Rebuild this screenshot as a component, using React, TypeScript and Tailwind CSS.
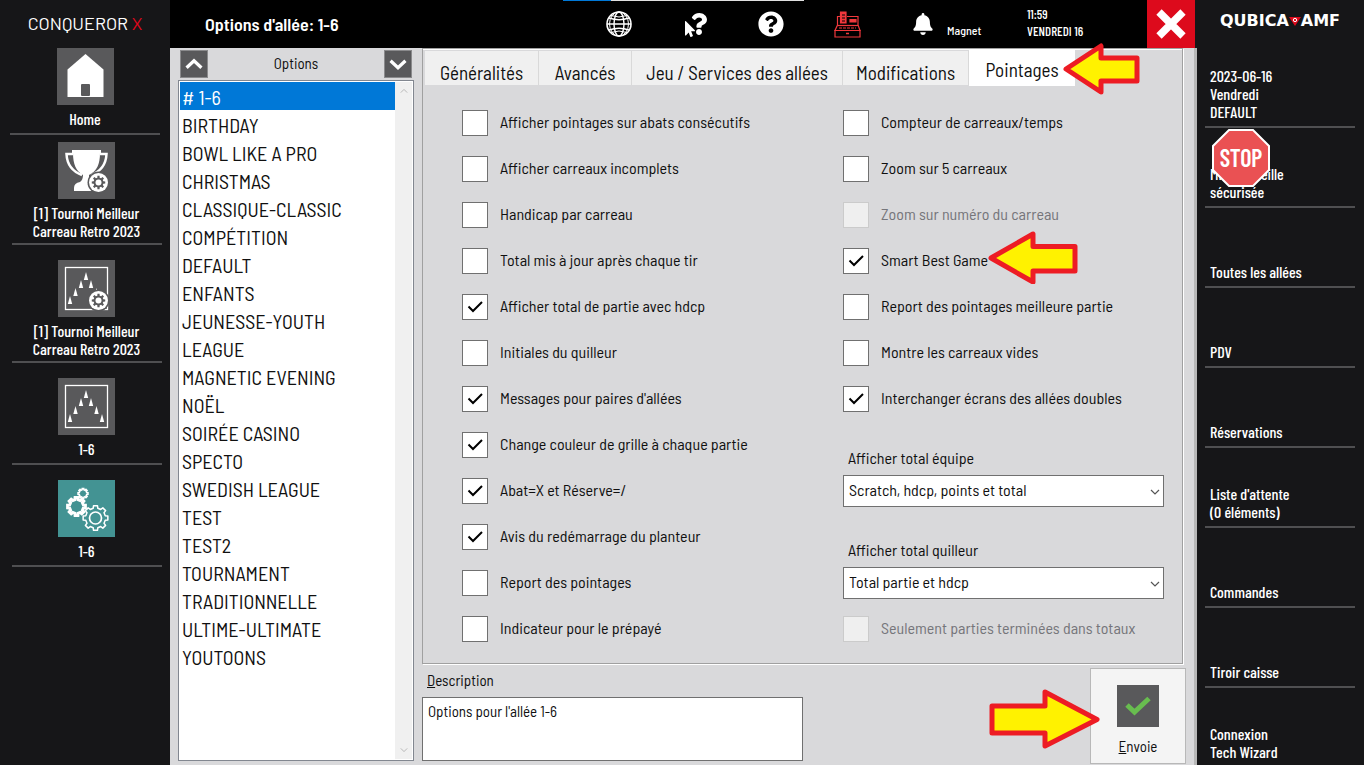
import React, { useState } from 'react';
import { FaBell, FaMousePointer, FaQuestion, FaQuestionCircle } from 'react-icons/fa';

const OPTIONS = [
    '# 1-6', 'BIRTHDAY', 'BOWL LIKE A PRO', 'CHRISTMAS', 'CLASSIQUE-CLASSIC', 'COMPÉTITION', 'DEFAULT',
    'ENFANTS', 'JEUNESSE-YOUTH', 'LEAGUE', 'MAGNETIC EVENING', 'NOËL', 'SOIRÉE CASINO', 'SPECTO',
    'SWEDISH LEAGUE', 'TEST', 'TEST2', 'TOURNAMENT', 'TRADITIONNELLE', 'ULTIME-ULTIMATE', 'YOUTOONS'
];

const TABS = [
    { label: 'Généralités', width: 'w-[114px]' },
    { label: 'Avancés', width: 'w-[93px]' },
    { label: 'Jeu / Services des allées', width: 'w-[211px]' },
    { label: 'Modifications', width: 'w-[126px]' },
    { label: 'Pointages', width: 'w-[106px]' }
];

interface CheckItem {
    label: string;
    checked?: boolean;
    disabled?: boolean;
    arrow?: boolean;
}

const LEFT_CHECKS: CheckItem[] = [
    { label: 'Afficher pointages sur abats consécutifs' },
    { label: 'Afficher carreaux incomplets' },
    { label: 'Handicap par carreau' },
    { label: 'Total mis à jour après chaque tir' },
    { label: 'Afficher total de partie avec hdcp', checked: true },
    { label: 'Initiales du quilleur' },
    { label: "Messages pour paires d'allées", checked: true },
    { label: 'Change couleur de grille à chaque partie', checked: true },
    { label: 'Abat=X et Réserve=/', checked: true },
    { label: 'Avis du redémarrage du planteur', checked: true },
    { label: 'Report des pointages' },
    { label: 'Indicateur pour le prépayé' }
];

const RIGHT_CHECKS: CheckItem[] = [
    { label: 'Compteur de carreaux/temps' },
    { label: 'Zoom sur 5 carreaux' },
    { label: 'Zoom sur numéro du carreau', disabled: true },
    { label: 'Smart Best Game', checked: true, arrow: true },
    { label: 'Report des pointages meilleure partie' },
    { label: 'Montre les carreaux vides' },
    { label: 'Interchanger écrans des allées doubles', checked: true }
];

const RIGHT_MENU: string[][] = [
    ['Mise en veille', 'sécurisée'],
    ['Toutes les allées'],
    ['PDV'],
    ['Réservations'],
    ["Liste d'attente", '(0 éléments)'],
    ['Commandes'],
    ['Tiroir caisse'],
    ['Connexion', 'Tech Wizard']
];

// Outline of a cog centred on cx, cy
const gearPath = (cx: number, cy: number, outer: number, inner: number, teeth: number) => {
    const step = (Math.PI * 2) / teeth;
    const pts: string[] = [];
    for (let i = 0; i < teeth; i++) {
        const a = i * step - Math.PI / 2;
        [[-0.3, inner], [-0.2, outer], [0.2, outer], [0.3, inner]].forEach(([k, r]) => {
            pts.push(`${(cx + Math.cos(a + k * step) * r).toFixed(2)} ${(cy + Math.sin(a + k * step) * r).toFixed(2)}`);
        });
    }
    return `M${pts.join('L')}Z`;
};

const HomeIcon = () => (
    <svg viewBox="0 0 57 57" className="size-[57px] bg-[#59595b]">
        <path d="M28.500 6 46.500 21.500V49H10.500V21.500Z" fill="#fff" />
        <rect x="24" y="36" width="9" height="12" rx="1" fill="#59595b" />
    </svg>
);

const GearBadge = () => (
    <g>
        <circle cx="40.500" cy="40.500" r="11" fill="#59595b" />
        <circle cx="40.500" cy="40.500" r="9.500" fill="#fff" />
        <path d={gearPath(40.5, 40.5, 6.8, 5, 8)} fill="#59595b" />
        <circle cx="40.500" cy="40.500" r="3" fill="#fff" />
    </g>
);

const TrophyIcon = () => (
    <svg viewBox="0 0 57 57" className="size-[57px] bg-[#59595b]">
        <path d="M14 8H43V11H42C42 22 39 29 31 33V39C31 42 38 43 38 49H16V46Q16 41 22 40Q25 38 25 33C18 29 15 22 15 11H14Z" fill="#fff" />
        <path d="M15 12H8.500C9 22 13 29 24 33M42 12H48.500C48 22 44 29 33 33" fill="none" stroke="#fff" strokeWidth="2.500" />
        <GearBadge />
    </svg>
);

const LanesIcon = ({ badge }: { badge?: boolean }) => {
    const pins = [[28, 12], [23, 20], [33, 20], [17.5, 28], [38.5, 28], [12, 36], [44, 36]];
    return (
        <svg viewBox="0 0 57 57" className="size-[57px] bg-[#59595b]">
            <rect x="7.500" y="7.500" width="42" height="42" fill="none" stroke="#fff" strokeWidth="1.300" />
            {pins.map(([x, y]) => (
                <path key={`${x}-${y}`} d={`M${x} ${y}l2.200 8h-4.400z`} fill="#fff" />
            ))}
            {badge && <GearBadge />}
        </svg>
    );
};

const GearsIcon = () => (
    <svg viewBox="0 0 57 57" className="size-[57px] bg-[#439393]" fill="none" stroke="#fff">
        <path d={gearPath(25, 13.5, 5, 3.8, 8)} strokeWidth="1.600" />
        <path d={gearPath(18.5, 26.5, 9, 7, 8)} strokeWidth="3" />
        <path d={gearPath(37.5, 38, 12.5, 10, 8)} strokeWidth="1.500" strokeLinejoin="round" />
        <circle cx="37.500" cy="38" r="6" strokeWidth="1.700" />
    </svg>
);

const GlobeIcon = () => (
    <svg viewBox="0 0 26 26" className="size-[26px]" fill="none" stroke="#fff" strokeWidth="1.400">
        <circle cx="13" cy="13" r="12" strokeWidth="1.600" />
        <ellipse cx="13" cy="13" rx="5" ry="12" />
        <ellipse cx="13" cy="13" rx="9.500" ry="12" strokeWidth="1" />
        <path d="M1 13H25M3 7Q13 10.500 23 7M3 19Q13 15.500 23 19" />
        <path d="M5 4.500Q13 7.500 21 4.500M5 21.500Q13 18.500 21 21.500" strokeWidth="1" />
    </svg>
);

const RegisterIcon = () => (
    <svg viewBox="0 0 28 28" className="size-7" fill="none" stroke="#f0383c" strokeWidth="1.200">
        <path d="M7 6.500H3.500V15L1 20.500H26L24 15V6.500H13" />
        <path d="M1 20.500H26V27H1Z" />
        <path d="M3.500 15.500H24" />
        <path d="M5 18H22" strokeDasharray="3 1" />
        <path d="M6.500 2H12V13H6.500Z" fill="#f0383c" />
        <path d="M8 5H11M8 8H11M8 11H11" stroke="#000" strokeWidth="1" />
        <path d="M16 9.500H22V12H16Z" fill="#f0383c" />
        <path d="M12 23.500H15" strokeWidth="1.500" />
    </svg>
);

const Chevron = ({ up }: { up?: boolean }) => (
    <svg viewBox="0 0 28 28" className="size-full" fill="none" stroke="#fff" strokeWidth="3.500">
        <path d={up ? 'M6 18 14 10.500 22 18' : 'M6 10.500 14 18 22 10.500'} />
    </svg>
);

const SmallChevron = ({ up, className }: { up?: boolean; className: string }) => (
    <svg viewBox="0 0 10 6" className={className} fill="none" stroke="currentColor" strokeWidth="1.200">
        <path d={up ? 'M1 5 5 1 9 5' : 'M1 1 5 5 9 1'} />
    </svg>
);

const CheckRow = ({ item }: { item: CheckItem }) => {
    const [checked, setChecked] = useState(!!item.checked);
    return (
        <div className="relative flex h-[46px] items-center">
            <label className={`flex items-center gap-3 ${item.disabled ? 'text-[#75757a]' : 'text-[#101010]'}`}>
                <span className="relative block size-[26px]">
                    <input
                        type="checkbox"
                        checked={checked}
                        disabled={item.disabled}
                        onChange={(e) => setChecked(e.target.checked)}
                        className="block size-[26px] appearance-none border border-[#707070] bg-white disabled:border-[#cbcbcb] disabled:bg-[#efefef]"
                    />
                    {checked && (
                        <svg viewBox="0 0 26 26" className="pointer-events-none absolute inset-0" fill="none" stroke="#000" strokeWidth="2">
                            <path d="M6.500 12.500 11 17 20 8" />
                        </svg>
                    )}
                </span>
                <span className="pb-0.5">{item.label}</span>
            </label>
            {item.arrow && (
                <svg viewBox="0 0 90 54" className="absolute -top-2 left-[145px] h-[54px] w-[90px]">
                    <path d="M3 28 45 4V16.500H87V41H45V52Z" fill="#fff200" stroke="#ed1c24" strokeWidth="5" strokeLinejoin="round" />
                </svg>
            )}
        </div>
    );
};

const ComboRow = ({ id, label, value }: { id: string; label: string; value: string }) => (
    <div className="flex h-[92px] flex-col justify-end pb-[7px]">
        <label htmlFor={id} className="mb-[7px] pl-[5px] leading-5">{label}</label>
        <div className="relative">
            <select id={id} className="block h-8 w-full appearance-none border border-[#707070] bg-white pb-0.5 pl-[5px] pr-6">
                <option>{value}</option>
            </select>
            <SmallChevron className="pointer-events-none absolute right-1 top-3.5 h-1.5 w-2.5 text-[#555]" />
        </div>
    </div>
);

const SideItem = ({ icon, lines }: { icon: React.ReactNode; lines: string[] }) => (
    <button className={`flex w-[150px] flex-col items-center border-b-2 border-[#4f4f51] leading-[18px] ${lines.length > 1 ? 'pb-[3px]' : 'pb-[5px]'}`}>
        <span className="mb-[5px] block">{icon}</span>
        {lines.map((line) => <span key={line}>{line}</span>)}
    </button>
);

export default function App() {
    const [selected, setSelected] = useState(OPTIONS[0]);
    const [activeTab, setActiveTab] = useState('Pointages');

    return (
        <div className="flex h-screen overflow-hidden bg-[#161618] font-['Barlow_Semi_Condensed','Roboto_Condensed','Liberation_Sans_Narrow',Roboto,sans-serif] text-base text-[#101010]">
            {/* Left navigation */}
            <nav className="flex w-[170px] shrink-0 flex-col items-center bg-[#161618] font-['Barlow_Condensed','Barlow_Semi_Condensed',Roboto,sans-serif] text-base font-medium text-white">
                <div className="flex h-12 items-center pb-0.5 font-['Barlow','Barlow_Semi_Condensed',Roboto,sans-serif] text-lg font-normal">
                    CONQUEROR&nbsp;<span className="text-[#e2071c]">X</span>
                </div>
                <SideItem icon={<HomeIcon />} lines={['Home']} />
                <div className="mt-[7px] flex flex-col gap-[15px] pl-[3px]">
                    <SideItem icon={<TrophyIcon />} lines={['[1] Tournoi Meilleur', 'Carreau Retro 2023']} />
                    <SideItem icon={<LanesIcon badge />} lines={['[1] Tournoi Meilleur', 'Carreau Retro 2023']} />
                    <SideItem icon={<LanesIcon />} lines={['1-6']} />
                    <SideItem icon={<GearsIcon />} lines={['1-6']} />
                </div>
            </nav>

            <div className="flex min-w-0 flex-1 flex-col">
                {/* Header */}
                <header className="relative mr-0.5 flex h-12 shrink-0 items-center justify-between bg-black text-white">
                    <div className="absolute left-[393px] top-0 flex h-px w-[241px] bg-[#e0e0e0]">
                        <div className="w-12 bg-[#0078d7]" />
                    </div>
                    <h1 className="pl-[35px] text-lg font-semibold">Options d'allée: 1-6</h1>
                    <div className="flex h-full items-center">
                        <div className="mr-[33px] flex items-center gap-[50px]">
                            <button aria-label="Langue"><GlobeIcon /></button>
                            <button aria-label="Aide contextuelle" className="flex w-[26px] items-center">
                                <FaMousePointer className="mt-2.5 size-4 shrink-0" />
                                <FaQuestion className="-ml-2.5 size-[22px] shrink-0" />
                            </button>
                            <button aria-label="Aide"><FaQuestionCircle className="size-[26px]" /></button>
                            <button aria-label="Caisse"><RegisterIcon /></button>
                            <button aria-label="Notifications"><FaBell className="size-[22px]" /></button>
                        </div>
                        <div className="-ml-5 mr-2 w-[72px] pt-3 text-xs font-medium">Magnet</div>
                        <div className="w-[120px] pb-0.5 font-['Barlow_Condensed','Barlow_Semi_Condensed',Roboto,sans-serif] text-[13px] font-medium leading-[17px]">
                            <div>11:59</div>
                            <div>VENDREDI 16</div>
                        </div>
                        <button aria-label="Fermer" className="size-12 bg-[#dd0a1c]">
                            <svg viewBox="0 0 48 48" className="size-full" stroke="#fff" strokeWidth="7.500">
                                <path d="M12 12 36 36M36 12 12 36" />
                            </svg>
                        </button>
                    </div>
                </header>

                <main className="flex min-h-0 flex-1 gap-2 border-r-3 border-[#b8b8b8] bg-[#d9d9db] pl-2 pr-2">
                    {/* Options list */}
                    <section className="flex w-[236px] shrink-0 flex-col pb-1 pt-0.5">
                        <div className="mb-0.5 flex items-center justify-between px-0.5">
                            <button aria-label="Monter" className="size-7 border border-[#8a8a8c] bg-[#59595b]"><Chevron up /></button>
                            <span className="pb-0.5 text-[15px]">Options</span>
                            <button aria-label="Descendre" className="size-7 border border-[#8a8a8c] bg-[#59595b]"><Chevron /></button>
                        </div>
                        <div className="flex min-h-0 flex-1 border border-[#828790] bg-white p-px">
                            <ul role="listbox" aria-label="Options" className="flex-1 overflow-hidden">
                                {OPTIONS.map((name) => (
                                    <li key={name} role="option" aria-selected={selected === name}>
                                        <button
                                            onClick={() => setSelected(name)}
                                            className={`block h-7 w-full pl-0.5 pt-px text-left text-xl leading-[26px] ${selected === name ? 'bg-[#0078d7] text-white' : ''}`}
                                        >
                                            {name}
                                        </button>
                                    </li>
                                ))}
                            </ul>
                            <div className="flex w-[17px] flex-col items-center justify-between bg-[#f0f0f0] py-1.5 text-[#b5b5b5]">
                                <SmallChevron up className="h-1.5 w-2" />
                                <SmallChevron className="h-1.5 w-2" />
                            </div>
                        </div>
                    </section>

                    <section className="flex min-w-0 flex-1 flex-col">
                        {/* Tab panel */}
                        <div className="mr-[3px] h-[616px] border border-[#a0a0a0] shadow-[1px_1px_0_#fff]">
                            <div role="tablist" className="flex h-[38px] items-start border-t border-white pl-0.5">
                                {TABS.map(({ label, width }) => (
                                    <button
                                        key={label}
                                        role="tab"
                                        aria-selected={activeTab === label}
                                        onClick={() => setActiveTab(label)}
                                        className={`relative whitespace-nowrap text-[19px] ${width} ${activeTab === label ? 'h-9 bg-white pt-1' : 'mt-px h-[34px] border-r border-[#d9d9d9] bg-[#f0f0f0] pt-2'}`}
                                    >
                                        {label}
                                        {label === 'Pointages' && (
                                            <svg viewBox="0 0 78 52" className="absolute -top-[7px] left-[93px] h-[52px] w-[78px]">
                                                <path d="M4 26 39 3V15H75V38H39V49Z" fill="#fff200" stroke="#ed1c24" strokeWidth="5" strokeLinejoin="round" />
                                            </svg>
                                        )}
                                    </button>
                                ))}
                            </div>
                            <div className="grid grid-cols-[381fr_321fr] pl-[39px] pr-[18px] pt-[13px]">
                                <div>
                                    {LEFT_CHECKS.map((item) => <CheckRow key={item.label} item={item} />)}
                                </div>
                                <div>
                                    {RIGHT_CHECKS.map((item) => <CheckRow key={item.label} item={item} />)}
                                    <ComboRow id="team-total" label="Afficher total équipe" value="Scratch, hdcp, points et total" />
                                    <ComboRow id="bowler-total" label="Afficher total quilleur" value="Total partie et hdcp" />
                                    <CheckRow item={{ label: 'Seulement parties terminées dans totaux', disabled: true }} />
                                </div>
                            </div>
                        </div>

                        {/* Description and send */}
                        <div className="flex items-start justify-between text-[15px]">
                            <div className="w-[381px] pt-1.5">
                                <label htmlFor="description" className="block h-[27px] pl-[5px] leading-5">
                                    <u>D</u>escription
                                </label>
                                <textarea
                                    id="description"
                                    defaultValue="Options pour l'allée 1-6"
                                    className="block h-16 w-full resize-none border border-[#707070] bg-white px-[5px] py-[3px] leading-5"
                                />
                            </div>
                            <button className="relative mt-1 flex size-24 flex-col items-center border border-[#b8b8b8] bg-[#f4f4f4] pt-4">
                                <svg viewBox="0 0 42 42" className="size-[42px] bg-[#59595b]" fill="none" stroke="#68bd4f" strokeWidth="5">
                                    <path d="M10 20 17.500 27 32 13.500" />
                                </svg>
                                <span className="mt-[9px] leading-5"><u>E</u>nvoie</span>
                                <svg viewBox="0 0 112 60" className="absolute -left-[103px] top-5 h-[60px] w-28">
                                    <path d="M4 17H57V3L109 30.500 57 57V44H4Z" fill="#fff200" stroke="#ed1c24" strokeWidth="5" strokeLinejoin="round" />
                                </svg>
                            </button>
                        </div>
                    </section>
                </main>
            </div>

            {/* Right menu */}
            <aside className="w-[167px] shrink-0 bg-[#161618] pl-2 pr-[9px] font-['Barlow_Condensed','Barlow_Semi_Condensed',Roboto,sans-serif] text-base font-medium leading-[18px] text-white">
                <div className="flex h-[42px] items-center justify-center font-['DejaVu_Sans',sans-serif] text-base font-bold">
                    QUBICA
                    <svg viewBox="0 0 12 10" className="h-2.5 w-3">
                        <path d="M0 1H12L6 10Z" fill="#dd0a1c" />
                        <circle cx="6" cy="4" r="1.700" fill="none" stroke="#fff" />
                    </svg>
                    AMF
                </div>
                <div className="flex h-[86px] flex-col justify-end border-b-2 border-[#4f4f51] pb-[5px] pl-[5px]">
                    <span>2023-06-16</span>
                    <span>Vendredi</span>
                    <span>DEFAULT</span>
                </div>
                {RIGHT_MENU.map((lines, i) => (
                    <button key={lines[0]} className="relative flex h-20 w-full flex-col items-start justify-end border-b-2 border-[#4f4f51] pb-[5px] pl-[5px]">
                        {lines.map((line) => <span key={line}>{line}</span>)}
                        {i === 0 && (
                            <svg viewBox="0 0 60 60" className="absolute left-1.5 top-0 size-[60px]">
                                <path d="M18 2H42L58 18V42L42 58H18L2 42V18Z" fill="#ea5153" stroke="#fff" strokeWidth="2" />
                                <text x="30" y="39" textAnchor="middle" fill="#fff" fontSize="24" fontWeight="600">STOP</text>
                            </svg>
                        )}
                    </button>
                ))}
            </aside>
        </div>
    );
}
